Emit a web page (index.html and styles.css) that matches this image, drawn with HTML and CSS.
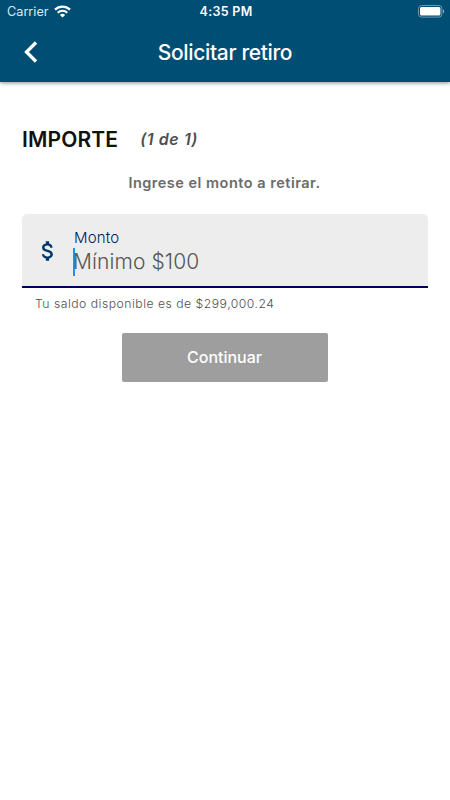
FILE: index.html
```html
<!DOCTYPE html>
<html lang="es">
<head>
    <meta charset="UTF-8">
    <meta name="viewport" content="width=device-width, initial-scale=1.0">
    <title>Solicitar retiro</title>
    <link rel="stylesheet" href="styles.css">
</head>
<body>

    <header class="header">
        <div class="status-bar">
            <div class="carrier">
                <span>Carrier</span>
                <svg class="wifi" viewBox="0 0 17 13" width="17" height="13">
                    <path d="M1 4.7a10.8 10.8 0 0 1 15 0" fill="none" stroke="#fff" stroke-width="2.4"/>
                    <path d="M3.7 7.7a6.9 6.9 0 0 1 9.6 0" fill="none" stroke="#fff" stroke-width="2"/>
                    <path d="M8.5 12.6L5.9 10a3.7 3.7 0 0 1 5.2 0z" fill="#fff"/>
                </svg>
            </div>
            <span class="time">4:35 PM</span>
            <svg class="battery" viewBox="0 0 27 13" width="27" height="13">
                <rect x="0.5" y="0.5" width="23.4" height="11.6" rx="3" fill="none" stroke="#6d98b3"/>
                <rect x="2" y="2" width="20.4" height="8.6" rx="1.5" fill="#fff"/>
                <path d="M25 4.3v4c1.6-.5 1.6-3.5 0-4z" fill="#8fb0c4"/>
            </svg>
        </div>
        <div class="nav-bar">
            <svg class="back" viewBox="0 0 14 22" width="14" height="22">
                <path d="M12 1.5L2.5 11L12 20.5" fill="none" stroke="#fff" stroke-width="3.3"/>
            </svg>
            <h1>Solicitar retiro</h1>
        </div>
    </header>

    <main class="content">
        <div class="step">
            <h2>IMPORTE</h2>
            <span class="step-count">(1 de 1)</span>
        </div>
        <p class="hint">Ingrese el monto a retirar.</p>

        <div class="field">
            <svg class="money" viewBox="0 0 24 24" width="26" height="26">
                <path fill="#00376b" d="M11.8 10.9c-2.27-.59-3-1.2-3-2.15 0-1.09 1.01-1.85 2.7-1.85 1.78 0 2.44.85 2.5 2.1h2.21c-.07-1.72-1.12-3.3-3.21-3.81V3h-3v2.16c-1.94.42-3.5 1.68-3.5 3.61 0 2.31 1.91 3.46 4.7 4.13 2.5.6 3 1.48 3 2.41 0 .69-.49 1.79-2.7 1.79-2.06 0-2.87-.92-2.98-2.1h-2.2c.12 2.19 1.76 3.42 3.68 3.83V21h3v-2.15c1.95-.37 3.5-1.5 3.5-3.55 0-2.84-2.43-3.81-4.7-4.4z"/>
            </svg>
            <div class="field-text">
                <label class="label" for="monto">Monto</label>
                <div class="input-row">
                    <span class="cursor"></span>
                    <input type="text" id="monto" placeholder="Mínimo $100">
                </div>
            </div>
        </div>
        <p class="balance">Tu saldo disponible es de $299,000.24</p>

        <button class="continue" disabled>Continuar</button>
    </main>

</body>
</html>
```
FILE: styles.css
```css
* {
    box-sizing: border-box;
}
body {
    font-family: Inter, sans-serif;
    background-color: #fff;
    margin: 0;
}
h1, h2, p {
    margin: 0;
}
svg {
    display: block;
}
.header {
    height: 82px;
    background-color: #004e73;
    color: #fff;
    box-shadow: 0 1px 4px rgba(0, 0, 0, 0.45);
}
.status-bar {
    display: grid;
    grid-template-columns: 1fr auto 1fr;
    align-items: center;
    height: 22px;
    padding: 0 5px 0 7px;
    font-size: 13px;
}
.carrier {
    display: flex;
    align-items: center;
    gap: 5px;
    font-size: 12.7px;
    color: #dce8ef;
}
.time {
    font-size: 12.5px;
    font-weight: 600;
    letter-spacing: 0.3px;
}
.battery {
    justify-self: end;
}
.nav-bar {
    display: grid;
    grid-template-columns: 14px 1fr 14px;
    align-items: center;
    height: 60px;
    padding: 0 24px;
}
.nav-bar h1 {
    padding-top: 1px;
    font-size: 21px;
    font-weight: 500;
    line-height: 24px;
    letter-spacing: -0.35px;
    text-align: center;
}
.content {
    padding: 45px 22px 0;
}
.step {
    display: flex;
    align-items: center;
    gap: 22px;
    height: 24px;
}
.step h2 {
    font-size: 21px;
    font-weight: 600;
    letter-spacing: 0.15px;
    color: #111;
}
.step-count {
    font-size: 16px;
    font-weight: 600;
    font-style: italic;
    letter-spacing: 0.6px;
    color: #505050;
}
.hint {
    margin-top: 22px;
    padding-right: 1px;
    font-size: 14.5px;
    font-weight: 600;
    line-height: 20px;
    letter-spacing: 0.5px;
    text-align: center;
    color: #6b6b6b;
}
.field {
    display: flex;
    align-items: center;
    height: 74px;
    margin-top: 21px;
    padding-left: 12px;
    background-color: #ededed;
    border-bottom: 2px solid #00005c;
    border-radius: 5px 5px 0 0;
}
.money {
    margin: 2px 0 0 1px;
}
.field-text {
    flex: 1;
    margin-left: 12px;
    padding-top: 5px;
}
.label {
    display: block;
    padding-left: 1px;
    font-size: 15px;
    font-weight: 300;
    line-height: 18px;
    letter-spacing: 0.2px;
    color: #00205f;
}
.input-row {
    display: flex;
    align-items: center;
    height: 30px;
}
.cursor {
    width: 2px;
    height: 28px;
    background-color: #1e90ff;
}
.input-row input {
    width: 300px;
    margin-left: -2px;
    padding: 0;
    border: none;
    outline: none;
    background: none;
    font-family: inherit;
    font-size: 21px;
    font-weight: 300;
    letter-spacing: 0.1px;
}
.input-row input::placeholder {
    color: #555;
    opacity: 1;
}
.balance {
    margin: 8px 0 0 13px;
    font-size: 12.2px;
    font-weight: 300;
    line-height: 16px;
    letter-spacing: 0.5px;
    color: #505050;
}
.continue {
    display: block;
    width: 206px;
    height: 49px;
    margin: 21px auto 0;
    padding: 0 1px 2px 0;
    border: none;
    border-radius: 2px;
    background-color: #9e9e9e;
    color: #fff;
    font-family: inherit;
    font-size: 16px;
    font-weight: 500;
}
```
